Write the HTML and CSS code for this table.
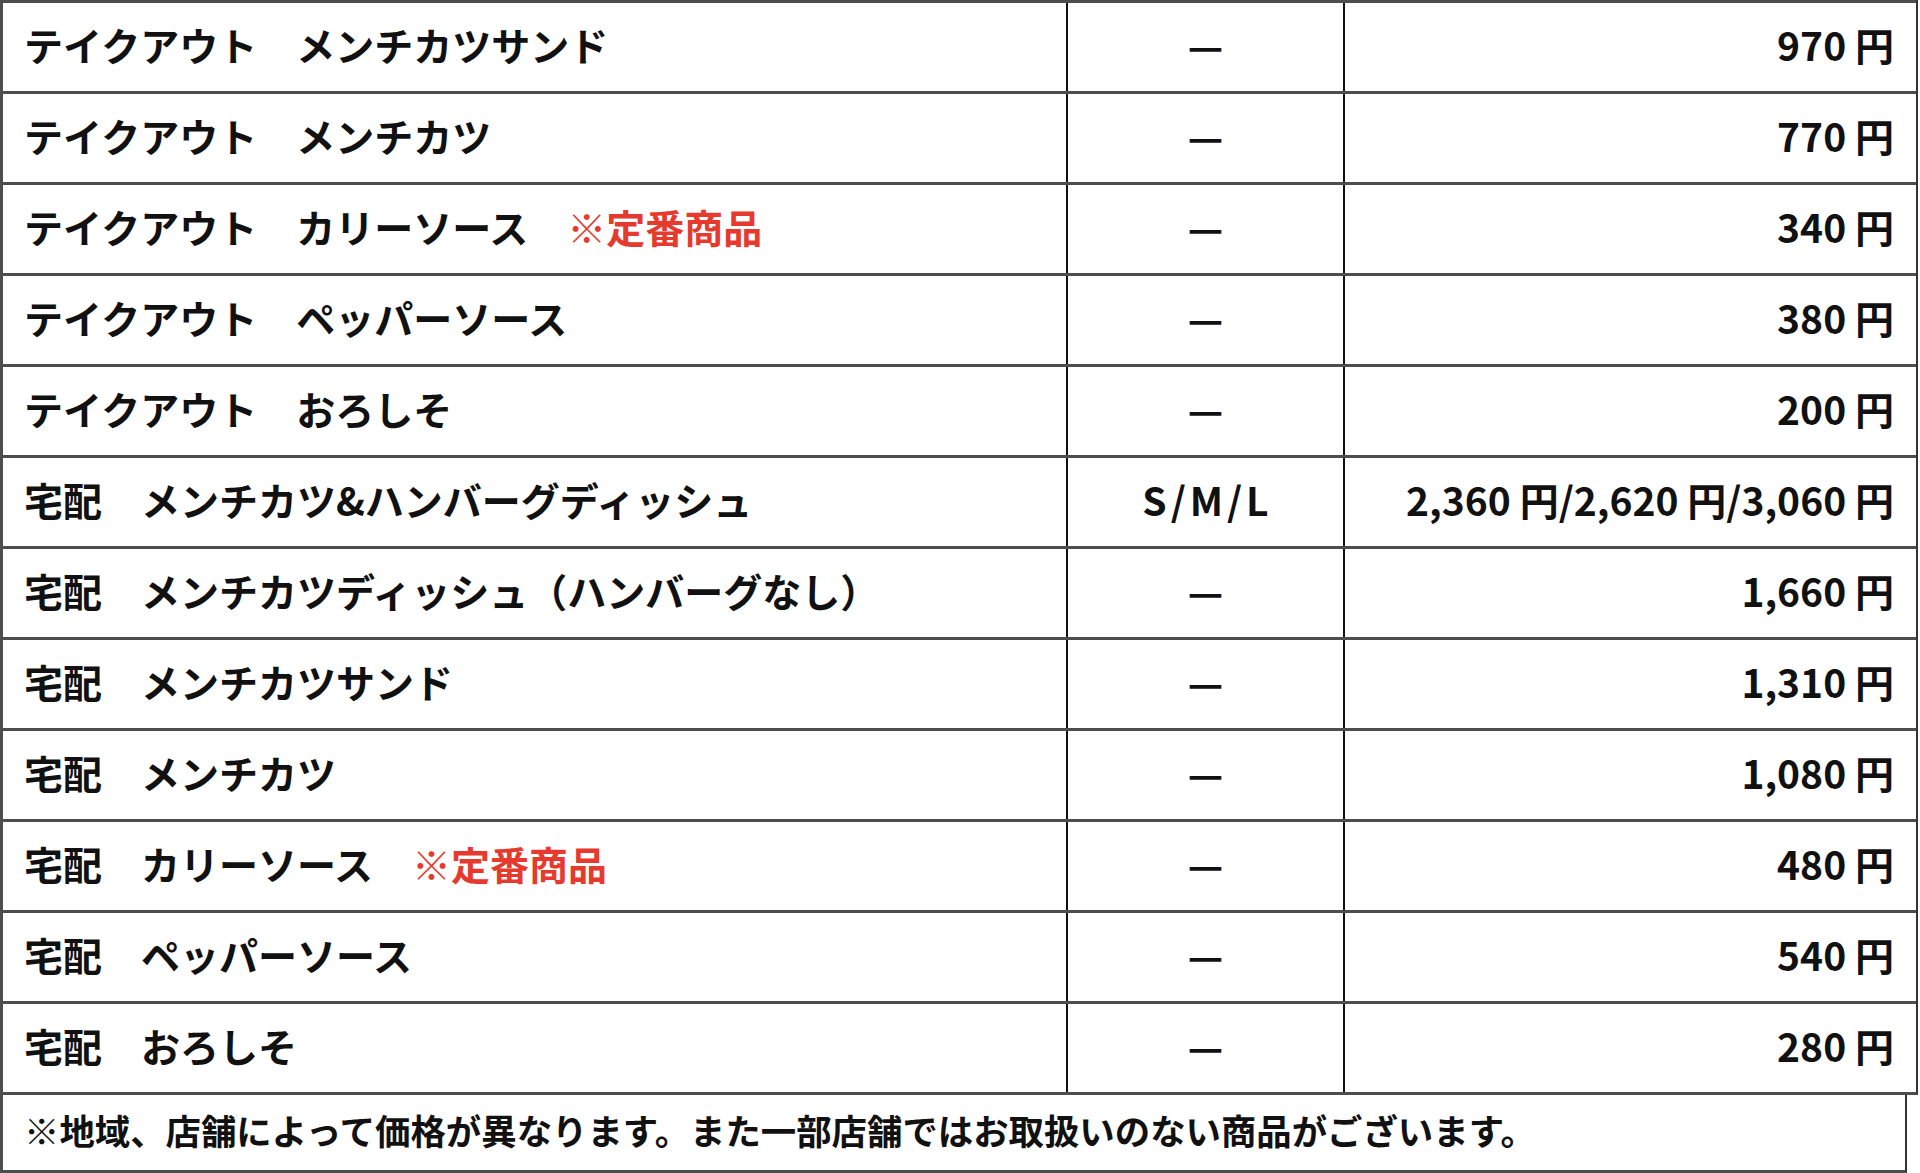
FILE: index.html
```html
<!DOCTYPE html>
<html lang="ja">
<head>
<meta charset="utf-8">
<title>価格表</title>
<link rel="stylesheet" href="styles.css">
</head>
<body>
<div class="price-table">
  <div class="row"><div class="cell name">テイクアウト　メンチカツサンド</div><div class="cell size">—</div><div class="cell price">970 円</div></div>
  <div class="row"><div class="cell name">テイクアウト　メンチカツ</div><div class="cell size">—</div><div class="cell price">770 円</div></div>
  <div class="row"><div class="cell name">テイクアウト　カリーソース　<span class="note">※定番商品</span></div><div class="cell size">—</div><div class="cell price">340 円</div></div>
  <div class="row"><div class="cell name">テイクアウト　ペッパーソース</div><div class="cell size">—</div><div class="cell price">380 円</div></div>
  <div class="row"><div class="cell name">テイクアウト　おろしそ</div><div class="cell size">—</div><div class="cell price">200 円</div></div>
  <div class="row"><div class="cell name">宅配　メンチカツ&amp;ハンバーグディッシュ</div><div class="cell size sml">S/M/L</div><div class="cell price">2,360 円/2,620 円/3,060 円</div></div>
  <div class="row"><div class="cell name">宅配　メンチカツディッシュ（ハンバーグなし）</div><div class="cell size">—</div><div class="cell price">1,660 円</div></div>
  <div class="row"><div class="cell name">宅配　メンチカツサンド</div><div class="cell size">—</div><div class="cell price">1,310 円</div></div>
  <div class="row"><div class="cell name">宅配　メンチカツ</div><div class="cell size">—</div><div class="cell price">1,080 円</div></div>
  <div class="row"><div class="cell name">宅配　カリーソース　<span class="note">※定番商品</span></div><div class="cell size">—</div><div class="cell price">480 円</div></div>
  <div class="row"><div class="cell name">宅配　ペッパーソース</div><div class="cell size">—</div><div class="cell price">540 円</div></div>
  <div class="row"><div class="cell name">宅配　おろしそ</div><div class="cell size">—</div><div class="cell price">280 円</div></div>
</div>
<div class="footnote">※地域、店舗によって価格が異なります。また一部店舗ではお取扱いのない商品がございます。</div>
</body>
</html>
```

FILE: styles.css
```css
html, body {
  margin: 0;
  padding: 0;
  background: #ffffff;
}

body {
  font-family: "Noto Sans CJK JP", "Noto Sans", sans-serif;
  font-weight: 700;
  color: #111111;
}

.price-table {
  width: 1918px;
  box-sizing: border-box;
  border-left: 3px solid #4d4d4d;
  border-right: 2px solid #333333;
  border-bottom: 3px solid #4d4d4d;
}

.row {
  display: grid;
  grid-template-columns: 1063px 277px 1fr;
  height: 91px;
  box-sizing: border-box;
  border-top: 3px solid #4d4d4d;
}

.cell {
  display: flex;
  align-items: center;
  font-size: 39px;
  line-height: 1;
  white-space: nowrap;
  box-sizing: border-box;
  padding-bottom: 5px;
}

.name {
  padding-left: 21px;
}

.size {
  justify-content: center;
  border-left: 2px solid #111111;
}

.sml {
  letter-spacing: 4px;
  padding-left: 4px;
}

.price {
  justify-content: flex-end;
  padding-right: 22px;
  border-left: 2px solid #111111;
}

.note {
  color: #e63a2e;
}

.footnote {
  width: 1907px;
  height: 78px;
  box-sizing: border-box;
  border-left: 3px solid #4d4d4d;
  border-right: 2px solid #333333;
  border-bottom: 3px solid #4d4d4d;
  display: flex;
  align-items: center;
  padding-left: 21px;
  padding-bottom: 5px;
  font-size: 35.4px;
  line-height: 1;
  white-space: nowrap;
}
```
